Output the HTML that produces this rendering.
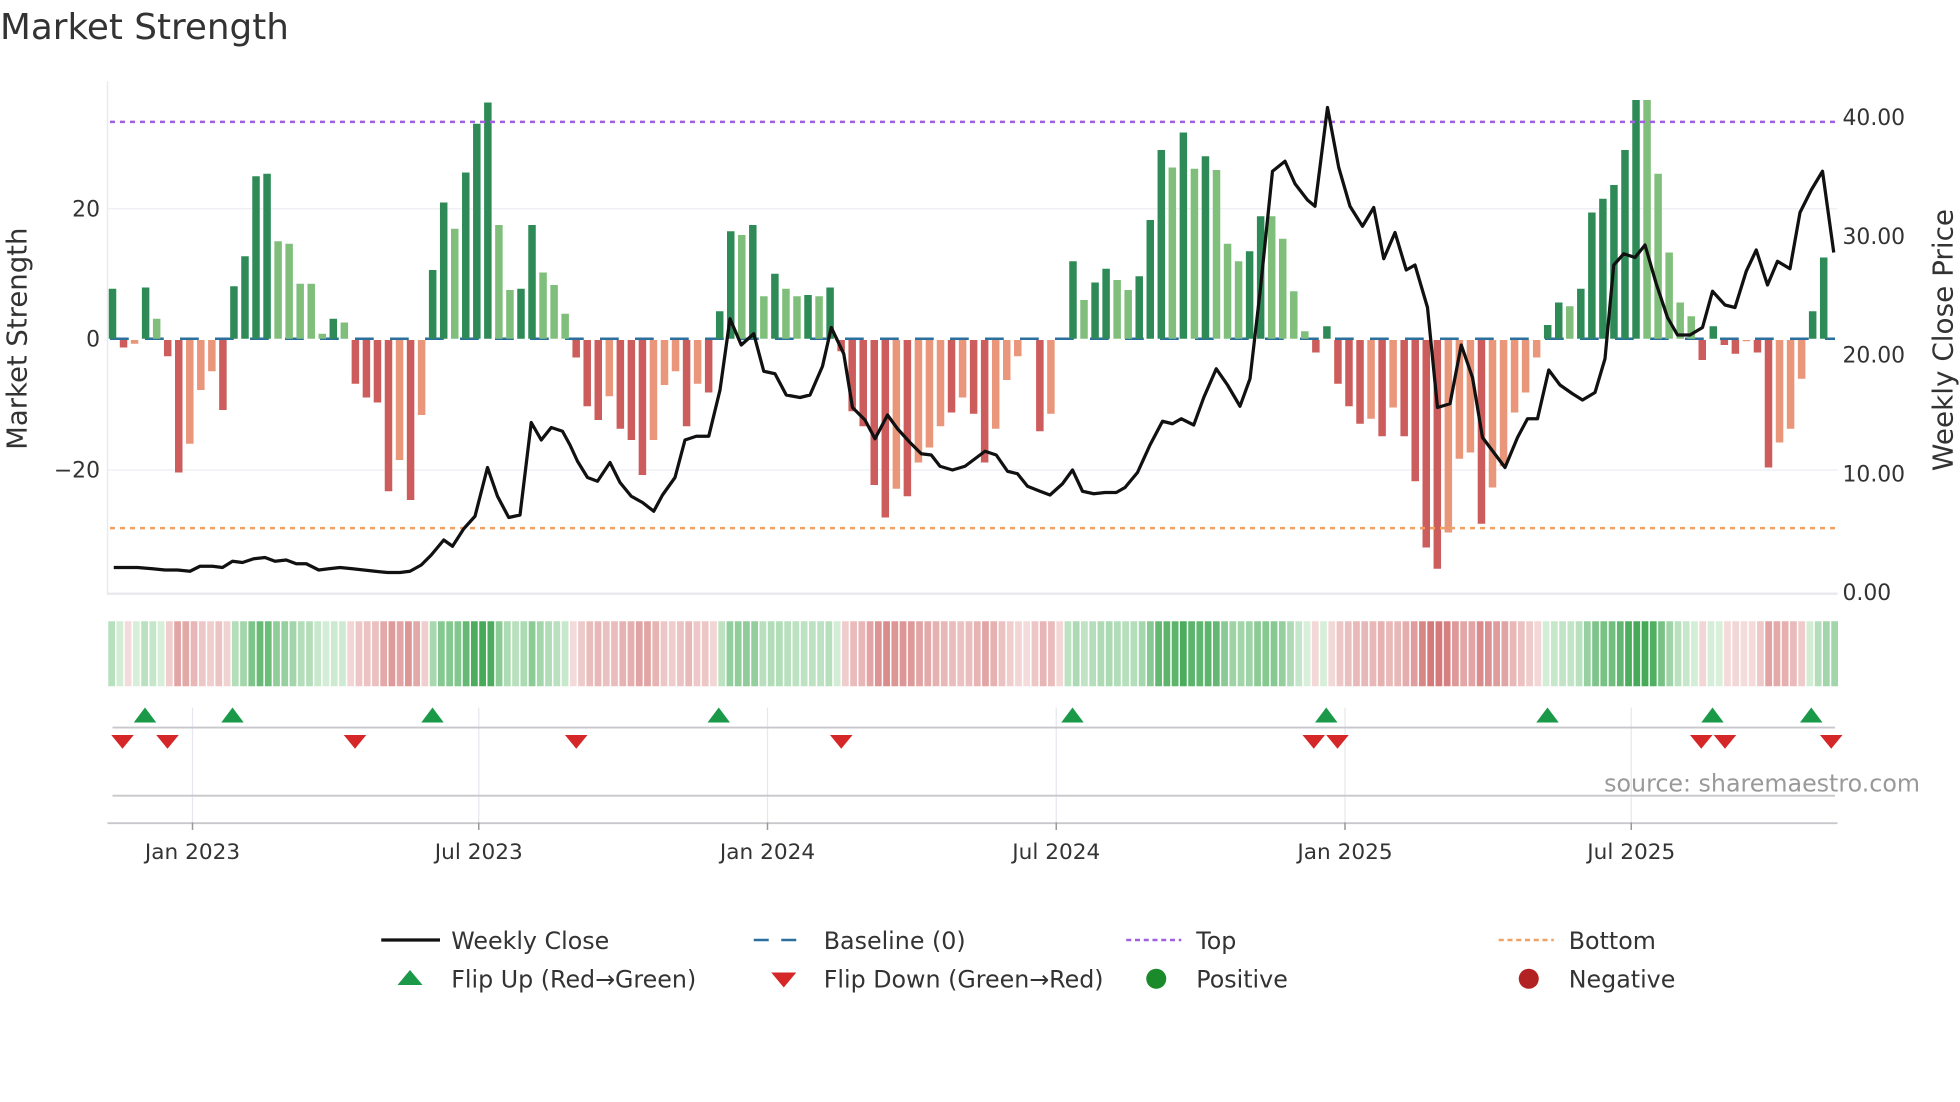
<!DOCTYPE html>
<html><head><meta charset="utf-8"><style>
html,body{margin:0;padding:0;background:#fff;}
svg{display:block;}
text{font-family:"DejaVu Sans","Liberation Sans",sans-serif;fill:#333;}
</style></head><body>
<svg id="s" width="1960" height="1102" viewBox="0 0 1568 881.6" xmlns="http://www.w3.org/2000/svg">
<text x="0" y="31" font-size="28.6">Market Strength</text>
<line x1="86" y1="65" x2="86" y2="476" stroke="#e8eaf0" stroke-width="1.2"/>
<line x1="86" y1="475" x2="1470" y2="475" stroke="#e8eaf0" stroke-width="2"/>
<line x1="86" y1="167" x2="1470" y2="167" stroke="#eceef3" stroke-width="1"/>
<line x1="86" y1="376" x2="1470" y2="376" stroke="#eceef3" stroke-width="1"/>
<text x="80" y="173" font-size="17.5" text-anchor="end">20</text>
<text x="80" y="277" font-size="17.5" text-anchor="end">0</text>
<text x="80" y="382" font-size="17.5" text-anchor="end">−20</text>
<text transform="translate(21,271) rotate(-90)" font-size="22" text-anchor="middle">Market Strength</text>
<text x="1474" y="100" font-size="17.5">40.00</text>
<text x="1474" y="195" font-size="17.5">30.00</text>
<text x="1474" y="290" font-size="17.5">20.00</text>
<text x="1474" y="385" font-size="17.5">10.00</text>
<text x="1474" y="480" font-size="17.5">0.00</text>
<text transform="translate(1562,272) rotate(-90)" font-size="22.3" text-anchor="middle">Weekly Close Price</text>
<line x1="88" y1="271" x2="1468" y2="271" stroke="#2a6f9e" stroke-width="2" stroke-dasharray="15 13"/>
<g id="bars"></g>
<line x1="88" y1="97.5" x2="1468" y2="97.5" stroke="#a060e0" stroke-width="2" stroke-dasharray="4 4"/>
<line x1="88" y1="422.5" x2="1468" y2="422.5" stroke="#f0a060" stroke-width="2" stroke-dasharray="4 4"/>
<polyline id="price" fill="none" stroke="#111" stroke-width="2.6" stroke-linejoin="round" points="91,454 100,454 110,454 122,455 132,456 142,456 152,457 160,453 170,453 178,454 186,449 194,450 203,447 212,446 220,449 229,448 237,451 245,451 255,456 263,455 272,454 282,455 291,456 300,457 310,458 320,458 328,457 337,452 345,444 355,432 362,437 371,423 380,413 390,374 398,397 407,414 416,412 425,338 433,352 441,342 450,345 456,356 462,369 470,382 478,385 488,370 496,386 505,397 514,402 523,409 530,396 540,382 548,352 557,349 567,349 576,312 584,255 593,276 603,267 611,297 620,299 629,316 640,318 648,316 658,293 665,262 675,283 682,326 692,336 700,351 710,332 718,343 728,354 737,363 745,364 752,373 762,376 772,373 780,367 788,361 797,364 806,377 814,379 822,389 832,393 840,396 850,387 858,376 866,393 875,395 884,394 893,394 900,390 910,378 920,356 930,337 938,339 945,335 955,340 963,318 973,295 982,308 992,325 1000,303 1008,234 1018,137 1028,129 1036,147 1046,160 1052,165 1062,86 1071,134 1080,165 1090,181 1099,166 1107,207 1116,186 1125,216 1132,212 1142,246 1150,326 1160,323 1169,276 1178,302 1186,350 1195,362 1204,374 1214,350 1222,335 1230,335 1239,296 1248,308 1258,315 1266,320 1276,314 1284,287 1291,212 1299,203 1308,206 1316,196 1325,227 1334,254 1342,268 1352,268 1362,262 1370,233 1380,244 1388,246 1397,217 1405,200 1414,228 1422,209 1432,215 1440,170 1449,152 1458,137 1467,202"/>
<g id="heat"></g>
<g stroke="#e6e8ef" stroke-width="1">
<line x1="154" y1="566" x2="154" y2="658"/><line x1="383" y1="566" x2="383" y2="658"/><line x1="614" y1="566" x2="614" y2="658"/><line x1="845" y1="566" x2="845" y2="658"/><line x1="1076" y1="566" x2="1076" y2="658"/><line x1="1305" y1="566" x2="1305" y2="658"/>
</g>
<line x1="90" y1="582" x2="1468" y2="582" stroke="#c8c8cc" stroke-width="1.5"/>
<line x1="90" y1="636.5" x2="1468" y2="636.5" stroke="#c8c8cc" stroke-width="1.5"/>
<line x1="86" y1="658.5" x2="1470" y2="658.5" stroke="#c8c8cc" stroke-width="1.5"/>
<g stroke="#999" stroke-width="1.2">
<line x1="154" y1="658" x2="154" y2="664"/><line x1="383" y1="658" x2="383" y2="664"/><line x1="614" y1="658" x2="614" y2="664"/><line x1="845" y1="658" x2="845" y2="664"/><line x1="1076" y1="658" x2="1076" y2="664"/><line x1="1305" y1="658" x2="1305" y2="664"/>
</g>
<g font-size="17.3" text-anchor="middle">
<text x="154" y="687">Jan 2023</text><text x="383" y="687">Jul 2023</text><text x="614" y="687">Jan 2024</text><text x="845" y="687">Jul 2024</text><text x="1076" y="687">Jan 2025</text><text x="1305" y="687">Jul 2025</text>
</g>
<g id="flips"></g>
<text x="1536" y="633" font-size="19" text-anchor="end" style="fill:#999">source: sharemaestro.com</text>
<g font-size="19">
<line x1="305" y1="752" x2="352" y2="752" stroke="#111" stroke-width="2.6"/>
<text x="361" y="759">Weekly Close</text>
<line x1="603" y1="752" x2="647" y2="752" stroke="#2a6f9e" stroke-width="2" stroke-dasharray="12 10"/>
<text x="659" y="759">Baseline (0)</text>
<line x1="901" y1="752" x2="945" y2="752" stroke="#a060e0" stroke-width="2" stroke-dasharray="4 3"/>
<text x="957" y="759">Top</text>
<line x1="1199" y1="752" x2="1243" y2="752" stroke="#f0a060" stroke-width="2" stroke-dasharray="4 3"/>
<text x="1255" y="759">Bottom</text>
<polygon points="318,788 338,788 328,776" fill="#1a9a48"/>
<text x="361" y="790">Flip Up (Red→Green)</text>
<polygon points="617,778 637,778 627,790" fill="#d62728"/>
<text x="659" y="790">Flip Down (Green→Red)</text>
<circle cx="925" cy="783" r="8" fill="#1a8a2a"/>
<text x="957" y="790">Positive</text>
<circle cx="1223" cy="783" r="8" fill="#b22222"/>
<text x="1255" y="790">Negative</text>
</g>
</svg>
<script>
var NS="http://www.w3.org/2000/svg";
function el(t,a,p){var e=document.createElementNS(NS,t);for(var k in a)e.setAttribute(k,a[k]);document.getElementById(p).appendChild(e);return e;}
var d=["G40","R-7","r-4","G41","g16","R-14","R-107","r-84","r-41","r-26","R-57","G42","G66","G130","G132","g78","g76","g44","g44","g4","G16","g13","R-36","R-47","R-51","R-122","r-97","R-129","r-61","G55","G109","g88","G133","G172","G189","g91","g39","G40","G91","g53","g43","g20","R-15","R-54","R-65","r-46","R-72","R-81","R-109","r-81","r-37","r-26","R-70","r-36","R-43","G22","G86","g83","G91","g34","G52","g40","g34","G35","g34","G41","R-10","R-58","R-70","R-117","R-143","r-120","R-126","r-99","r-87","r-70","R-59","r-47","R-60","R-99","r-72","r-33","r-14","r0","R-74","r-60","r0","G62","g31","G45","G56","g47","g39","G50","G95","G151","g137","G165","g136","G146","g135","g76","g62","G70","G98","g98","g80","g38","g6","R-11","G10","R-36","R-54","R-68","r-64","R-78","r-55","R-78","R-114","R-167","R-184","r-155","r-96","r-91","R-148","r-119","r-102","r-59","r-43","r-15","G11","G29","g26","G40","G101","G112","G123","G151","G191","g191","g132","g69","g29","g18","R-17","G10","R-5","R-12","r-2","R-11","R-103","r-83","r-72","r-32","G22","G65"];
var col={G:"#2e8b57",g:"#7fbf7b",R:"#cd5c5c",r:"#e9967a"};
var vals=[];
d.forEach(function(s,i){var c=s[0],v=+s.slice(1);vals.push(v);var x=90+i*8.832;
if(v>0)el("rect",{x:x-3,y:271-v,width:6,height:v,fill:col[c]},"bars");
else if(v<0)el("rect",{x:x-3,y:272,width:6,height:-v-1,fill:col[c]},"bars");});
function mix(a,b,t){var r=[];for(var i=0;i<3;i++)r.push(Math.round(a[i]+(b[i]-a[i])*t));return "rgb("+r.join(",")+")";}
var n=210,w=(1471-86)/n;
for(var j=0;j<n;j++){var cx=86+(j+0.5)*w;var k=(cx-90)/8.832;var i0=Math.max(0,Math.min(155,Math.floor(k))),i1=Math.min(155,i0+1),f=Math.max(0,Math.min(1,k-i0));
var v=vals[i0]*(1-f)+vals[i1]*f;var t=Math.min(1,Math.abs(v)/170);
var c=v>=0?mix([218,240,220],[70,170,88],t):mix([245,222,222],[212,122,122],t);
el("rect",{x:86+j*w+0.6,y:497,width:w-1.2,height:52,fill:c},"heat");}
[116,186,346,575,858,1061,1238,1370,1449].forEach(function(x){el("polygon",{points:(x-9)+",578 "+(x+9)+",578 "+x+",566",fill:"#1a9a48"},"flips");});
[98,134,284,461,673,1051,1070,1361,1380,1465].forEach(function(x){el("polygon",{points:(x-9)+",588 "+(x+9)+",588 "+x+",599",fill:"#d62728"},"flips");});
</script>
</body></html>
